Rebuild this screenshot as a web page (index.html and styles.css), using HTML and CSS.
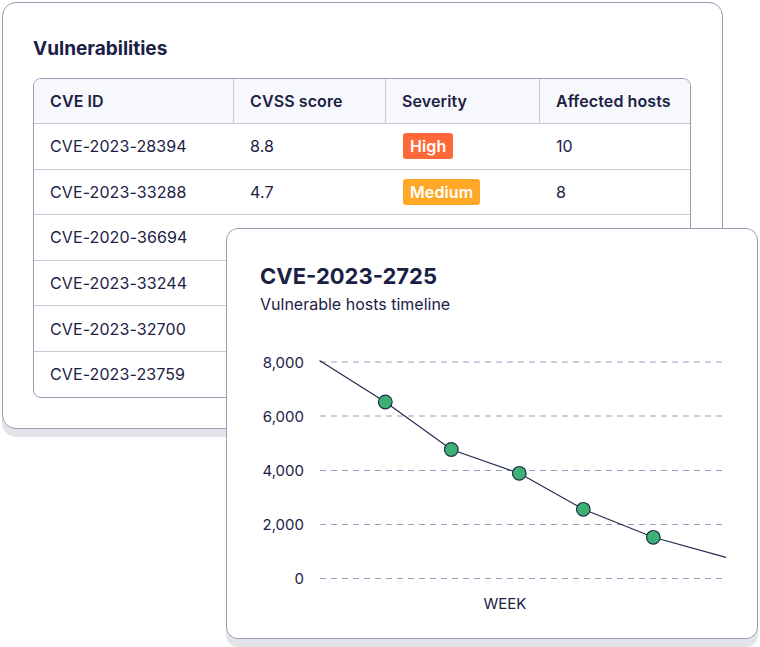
FILE: index.html
```html
<!DOCTYPE html>
<html>
<head>
<meta charset="utf-8">
<link rel="stylesheet" href="styles.css">
</head>
<body>
<div class="stage">
  <section class="card vuln">
    <h2 class="title">Vulnerabilities</h2>
    <div class="table">
      <div class="row head">
        <div class="cell">CVE ID</div>
        <div class="cell">CVSS score</div>
        <div class="cell">Severity</div>
        <div class="cell">Affected hosts</div>
      </div>
      <div class="row">
        <div class="cell">CVE-2023-28394</div>
        <div class="cell">8.8</div>
        <div class="cell"><span class="badge high">High</span></div>
        <div class="cell">10</div>
      </div>
      <div class="row">
        <div class="cell">CVE-2023-33288</div>
        <div class="cell">4.7</div>
        <div class="cell"><span class="badge medium">Medium</span></div>
        <div class="cell">8</div>
      </div>
      <div class="row">
        <div class="cell">CVE-2020-36694</div>
        <div class="cell"></div>
        <div class="cell"></div>
        <div class="cell"></div>
      </div>
      <div class="row">
        <div class="cell">CVE-2023-33244</div>
        <div class="cell"></div>
        <div class="cell"></div>
        <div class="cell"></div>
      </div>
      <div class="row">
        <div class="cell">CVE-2023-32700</div>
        <div class="cell"></div>
        <div class="cell"></div>
        <div class="cell"></div>
      </div>
      <div class="row">
        <div class="cell">CVE-2023-23759</div>
        <div class="cell"></div>
        <div class="cell"></div>
        <div class="cell"></div>
      </div>
    </div>
  </section>

  <section class="card chart-card">
    <div class="chart-head">
      <h3 class="chart-title">CVE-2023-2725</h3>
      <p class="chart-sub">Vulnerable hosts timeline</p>
    </div>
    <svg class="chart" width="530" height="300" viewBox="227 330 530 300">
      <g class="grid">
        <line x1="320" y1="362" x2="724" y2="362"/>
        <line x1="320" y1="416" x2="724" y2="416"/>
        <line x1="320" y1="470.5" x2="724" y2="470.5"/>
        <line x1="320" y1="524.5" x2="724" y2="524.5"/>
        <line x1="320" y1="578.5" x2="724" y2="578.5"/>
      </g>
      <g class="axis">
        <text x="304" y="367.5">8,000</text>
        <text x="304" y="421.5">6,000</text>
        <text x="304" y="475.5">4,000</text>
        <text x="304" y="529.5">2,000</text>
        <text x="304" y="583.5">0</text>
      </g>
      <polyline class="line" points="319.5,360.5 385.3,402 451.3,449.5 519.3,473.3 583.3,509.3 653.3,537.3 726,557.3"/>
      <g class="dots">
        <circle cx="385.3" cy="402" r="6.8"/>
        <circle cx="451.3" cy="449.5" r="6.8"/>
        <circle cx="519.3" cy="473.3" r="6.8"/>
        <circle cx="583.3" cy="509.3" r="6.8"/>
        <circle cx="653.3" cy="537.3" r="6.8"/>
      </g>
      <text class="xlabel" x="505" y="608.5">WEEK</text>
    </svg>
  </section>
</div>
</body>
</html>
```

FILE: styles.css
```css
* { box-sizing: border-box; }

html, body {
  margin: 0;
  padding: 0;
  background: #ffffff;
}

body {
  font-family: Inter, "Noto Sans", "Liberation Sans", sans-serif;
  color: #1c2146;
}

.stage {
  position: relative;
  width: 760px;
  height: 647px;
  overflow: hidden;
}

.card {
  background: #ffffff;
  border: 1px solid #9a9db2;
}

.vuln {
  margin: 2px 0 0 2px;
  width: 721px;
  height: 427px;
  border-radius: 14px;
  padding: 34px 30px 0 30px;
  box-shadow: 0 8px 0 0 #e3e4ea;
}

.title {
  margin: 0;
  font-size: 19px;
  line-height: 24px;
  font-weight: 700;
  color: #1b2045;
}

.table {
  margin-top: 17px;
  width: 658px;
  border: 1px solid #9a9db2;
  border-radius: 8px;
  overflow: hidden;
}

.row {
  display: grid;
  grid-template-columns: 200px 152px 154px 1fr;
  height: 45.6px;
  border-bottom: 1px solid #c6c9d6;
  font-size: 16px;
  letter-spacing: 0.1px;
}

.row:last-child {
  border-bottom: none;
  height: 44.6px;
}

.row.head {
  height: 45px;
  background: #f7f8fb;
  font-weight: 600;
}

.row.head .cell {
  border-right: 1px solid #c6c9d6;
}

.row.head .cell:last-child {
  border-right: none;
}

.cell {
  display: flex;
  align-items: center;
  padding-left: 16px;
  white-space: nowrap;
}

.badge {
  display: inline-block;
  height: 26px;
  line-height: 26px;
  padding: 0 7px;
  border-radius: 3px;
  color: #ffffff;
  font-weight: 600;
  font-size: 16px;
  margin-left: 1px;
}

.badge.high { background: #ff6838; }
.badge.medium { background: #ffa726; }

.chart-card {
  position: absolute;
  left: 226px;
  top: 228px;
  width: 532px;
  height: 411px;
  border-radius: 12px;
  box-shadow: 0 8px 0 0 #e3e4ea;
}

.chart-head {
  padding: 33px 0 0 33px;
  height: 101px;
}

.chart-title {
  margin: 0;
  font-size: 22px;
  line-height: 28px;
  font-weight: 700;
  color: #1b2045;
}

.chart-sub {
  margin: 3px 0 0 0;
  font-size: 16px;
  line-height: 22px;
  color: #1c2146;
}

.chart {
  display: block;
}

.grid line {
  stroke: #9a9dbb;
  stroke-width: 1;
  stroke-dasharray: 6 5;
}

.axis text {
  font-family: Inter, "Noto Sans", "Liberation Sans", sans-serif;
  font-size: 15px;
  fill: #1c2146;
  text-anchor: end;
}

.line {
  fill: none;
  stroke: #232a4f;
  stroke-width: 1.2;
}

.dots circle {
  fill: #3bb274;
  stroke: #1f2a4a;
  stroke-width: 1.2;
}

.xlabel {
  font-family: Inter, "Noto Sans", "Liberation Sans", sans-serif;
  font-size: 15px;
  fill: #1c2146;
  text-anchor: middle;
}
```
